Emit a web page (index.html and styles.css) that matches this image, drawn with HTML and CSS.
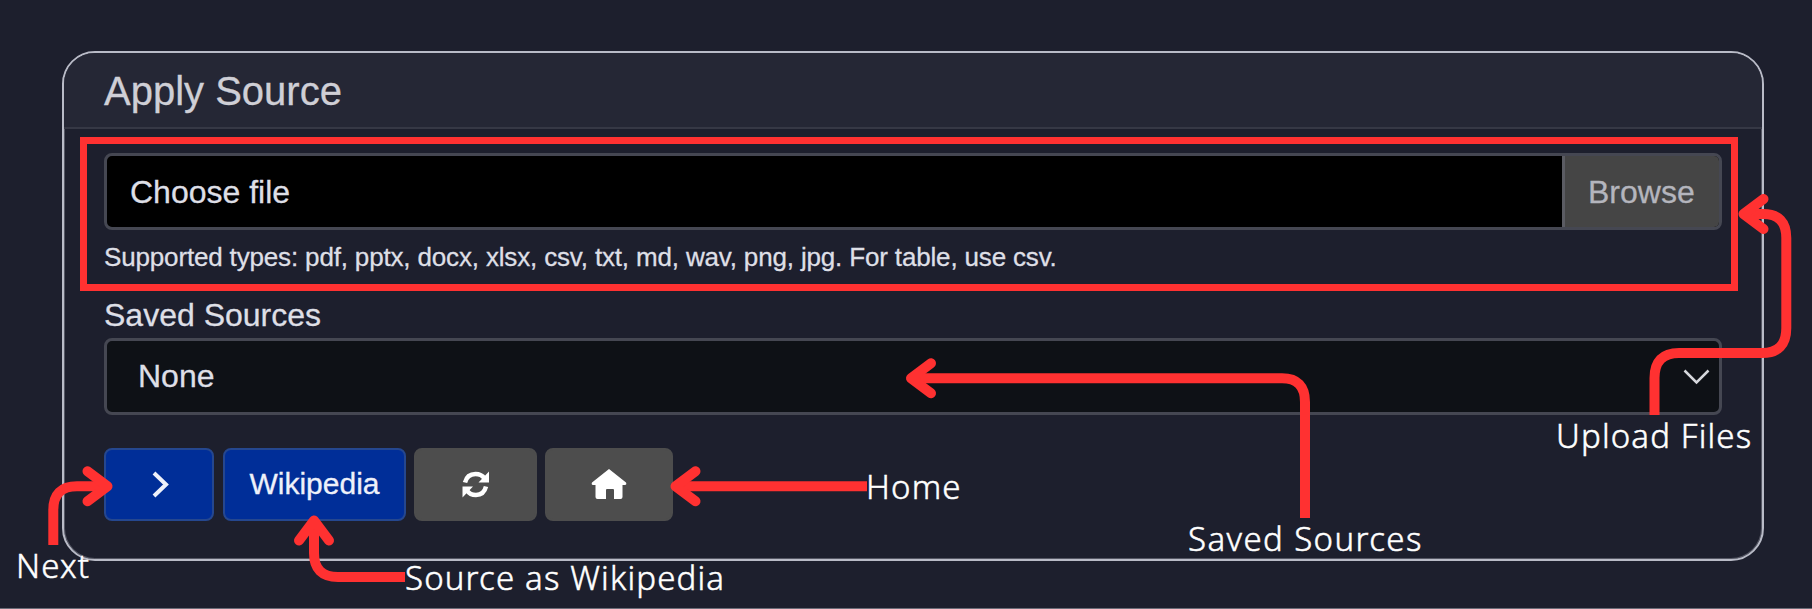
FILE: index.html
```html
<!DOCTYPE html>
<html lang="en">
<head>
<meta charset="utf-8">
<title>Apply Source</title>
<link rel="stylesheet" href="styles.css">
</head>
<body>
<main class="card">
  <h1 class="card-header">Apply Source</h1>
  <div class="card-body">
    <div class="file-input">
      <span class="file-name">Choose file</span>
      <span class="browse">Browse</span>
    </div>
    <p class="hint">Supported types: pdf, pptx, docx, xlsx, csv, txt, md, wav, png, jpg. For table, use csv.</p>
    <div class="label">Saved Sources</div>
    <div class="select">
      <span>None</span>
      <svg class="caret" width="27" height="16" viewBox="0 0 27 16"><path d="M1.5 1.5 13.5 13.5 25.5 1.5"/></svg>
    </div>
    <div class="buttons">
      <button class="btn primary next"><svg width="18" height="28" viewBox="0 0 18 28"><path class="line" d="M3 2 15 13.500 3 25"/></svg></button>
      <button class="btn primary wiki"><span>Wikipedia</span></button>
      <button class="btn refresh"><svg width="30" height="28" viewBox="0 0 30 28"><path class="arc" d="M4 11.500C5.500 5.500 9 3 14.500 3c4 0 7 1.500 9 4.500M25 15.500C23.500 21.500 20.500 24 15 24c-4 0-7-1.500-9-4.500"/><path class="solid" d="M28 .5v11H17.500zM1.500 26.500v-11H12z"/></svg></button>
      <button class="btn home"><svg width="36" height="31" viewBox="0 0 36 31"><path class="solid" d="M18 0 35 13.500q1 2-1 2.500h-2.500v12q0 2-2 2h-6.500V21q0-1-1-1h-6q-1 0-1 1v9H6.500q-2 0-2-2V16H2q-2-.5-1-2.500z"/></svg></button>
    </div>
  </div>
</main>
<div class="highlight"></div>
<svg class="arrows" width="1812" height="609" viewBox="0 0 1812 609">
  <path d="M1654.500 415V378Q1654.500 353 1679 353H1762Q1786.300 353 1786.300 328V238Q1786.300 214 1763 214H1744"/>
  <path class="head" d="M1763.500 199 1743.500 214 1763.500 229"/>
  <path d="M1305 518V402Q1305 378.300 1282 378.300H912"/>
  <path class="head" d="M931 363.300 911 378.300 931 393.300"/>
  <path d="M867 486.300H676"/>
  <path class="head" d="M695.500 471.300 675.500 486.300 695.500 501.300"/>
  <path d="M405 577H338Q314 577 314 553V521"/>
  <path class="head" d="M299 540.500 314 520.500 329 540.500"/>
  <path d="M53.300 545V510Q53.300 486.300 77 486.300H106"/>
  <path class="head" d="M87.500 471.300 107.500 486.300 87.500 501.300"/>
</svg>
<span class="note n-next">Next</span>
<span class="note n-wiki">Source as Wikipedia</span>
<span class="note n-home">Home</span>
<span class="note n-saved">Saved Sources</span>
<span class="note n-upload">Upload Files</span>
</body>
</html>
```
FILE: styles.css
```css
* { box-sizing: border-box; }
body {
  margin: 0;
  position: relative;
  width: 1812px;
  height: 609px;
  padding: 51px 48px 0 62px;
  background: #1d1f2d;
  border-bottom: 1px solid #6b6c78;
  font-family: "Liberation Sans", Arial, sans-serif;
  color: #dedfe6;
  overflow: hidden;
}
.card {
  height: 510px;
  border: 2px solid #b9bbc7;
  box-shadow: inset 0 0 0 1px #555764;
  border-radius: 33px;
  overflow: hidden;
}
.card-header {
  margin: 0;
  height: 76px;
  padding: 0 0 0 40px;
  background: #252735;
  border-bottom: 2px solid #363845;
  font-size: 40px;
  font-weight: 400;
  line-height: 76px;
  color: #cfcfd6;
  -webkit-text-stroke: .3px #cfcfd6;
}
.card-body { padding: 24px 40px 0; -webkit-text-stroke: .3px currentColor; }
.file-input, .select {
  display: flex;
  height: 77px;
  border: 3px solid #454752;
  border-radius: 8px;
  font-size: 32px;
  line-height: 73px;
  overflow: hidden;
}
.file-input { background: #000; justify-content: space-between; }
.file-name { padding-left: 23px; }
.browse {
  width: 157px;
  padding-left: 23px;
  border-left: 3px solid #5b5c63;
  background: #454545;
  color: #b4b5bd;
}
.hint {
  margin: 11px 0 0;
  height: 33px;
  font-size: 26px;
  line-height: 33px;
  letter-spacing: -.16px;
  white-space: nowrap;
}
.label {
  margin-top: 22px;
  height: 42px;
  font-size: 32px;
  line-height: 38px;
}
.select {
  background: #0e1116;
  justify-content: space-between;
  align-items: center;
  padding: 0 9px 0 31px;
}
.caret path { fill: none; stroke: #d5d7dc; stroke-width: 2.500; }
.buttons { display: flex; margin-top: 33px; }
.btn {
  display: flex;
  align-items: center;
  justify-content: center;
  height: 73px;
  padding: 0;
  border: 2px solid #4d4d4d;
  border-radius: 8px;
  background: #4d4d4d;
  color: #eef1fa;
  font: 30px "Liberation Sans", Arial, sans-serif;
  -webkit-text-stroke: .3px currentColor;
}
.primary { background: #002e98; border-color: #25478f; }
.next { width: 110px; margin-right: 9px; padding-left: 2px; }
.wiki { width: 183px; margin-right: 8px; padding-bottom: 2px; }
.refresh { width: 123px; margin-right: 8px; }
.home { width: 128px; }
.line { fill: none; stroke: #eef1fa; stroke-width: 4; }
.arc { fill: none; stroke: #fff; stroke-width: 4.500; }
.solid { fill: #fff; }
.highlight {
  position: absolute;
  left: 80px;
  top: 137px;
  width: 1658px;
  height: 154px;
  border: 7px solid #ff3131;
}
.arrows { position: absolute; left: 0; top: 0; }
.arrows path { fill: none; stroke: #ff3131; stroke-width: 10; }
.arrows .head { stroke-linecap: round; stroke-linejoin: round; }
.note {
  position: absolute;
  font-family: "Noto Sans", sans-serif;
  font-weight: 300;
  font-size: 33px;
  line-height: 40px;
  letter-spacing: 1.15px;
  -webkit-text-stroke: .5px #fff;
  color: #fff;
  white-space: nowrap;
}
.n-next { left: 16px; top: 546px; }
.n-wiki { left: 405px; top: 558px; }
.n-home { left: 866px; top: 467px; }
.n-saved { left: 1188px; top: 519px; letter-spacing: 1.400px; }
.n-upload { left: 1556px; top: 416px; }
```
